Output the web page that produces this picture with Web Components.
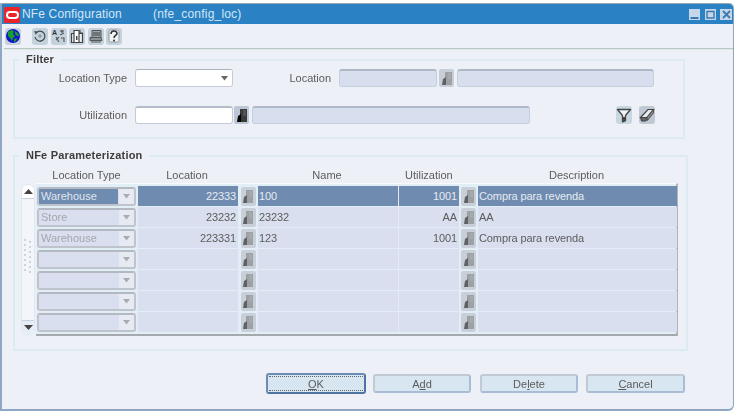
<!DOCTYPE html>
<html><head><meta charset="utf-8"><title>NFe Configuration</title>
<style>
html,body{margin:0;padding:0;background:#fff;width:739px;height:412px;overflow:hidden;font:11px "Liberation Sans",Arial,sans-serif;color:#5c5c5c}
</style></head><body>
<nfe-window>
  <nfe-title slot="title" name="NFe Configuration" code="(nfe_config_loc)"></nfe-title>
  <nfe-toolbar slot="tools"></nfe-toolbar>
  <nfe-group label="Filter" style="--w:672px;--h:86px;--ml:11px;--mt:3px">
    <nfe-filter></nfe-filter>
  </nfe-group>
  <nfe-group label="NFe Parameterization" style="--w:675px;--h:202px;--ml:11px;--mt:10px">
    <nfe-table></nfe-table>
  </nfe-group>
  <nfe-actions>
    <nfe-btn focus style="width:100px"><u>O</u>K</nfe-btn>
    <nfe-btn style="width:98px;margin-left:-1px">A<u>d</u>d</nfe-btn>
    <nfe-btn style="width:98px;margin-left:1px">De<u>l</u>ete</nfe-btn>
    <nfe-btn style="width:99px"><u>C</u>ancel</nfe-btn>
  </nfe-actions>
</nfe-window>
<script>
const def=(tag,html,init)=>customElements.define(tag,class extends HTMLElement{
  constructor(){super();this.attachShadow({mode:'open'}).innerHTML=typeof html==='function'?html(this):html}
  connectedCallback(){
    if(typeof html==='function'){this.shadowRoot.innerHTML=html(this)}
    if(init)init(this)
  }
});
const a=(el,n,d='')=>el.getAttribute(n)??d;

const ICONS={
 globe:`<circle cx="8" cy="8" r="7" fill="#1414c8"/><path d="M3 4l3-2 3 1-1 3 2 2-2 2-1 3-2-3-2-2z" fill="#12a02e"/><path d="M10 3l3 2 1 3-2 0-2-2z" fill="#12a02e"/><path d="M9 11l3-1-1 3-2 1z" fill="#12a02e"/>`,
 refresh:`<path d="M4 5a5 5 0 1 1-1 4" fill="none" stroke="#4a4a4a" stroke-width="1.3"/><path d="M2 3l3 .5L4 7z" fill="#4a4a4a"/><path d="M6 8h4M8 6v4" stroke="#888" stroke-width="1"/>`,
 lang:`<text x="1" y="7" font-size="7" font-weight="700" font-family="Liberation Sans" fill="#333">A</text><path d="M9 3h4M11 2v3M9 7l4-2" stroke="#444" stroke-width="1" fill="none"/><path d="M5 9l3 5M8 9l-3 3M10 10h3v4" stroke="#555" stroke-width="1.1" fill="none"/>`,
 door:`<path d="M2.500 5.500h11v9h-11z" fill="#e8eef2" stroke="#444" stroke-width="1.2"/><path d="M5 2.500h5v12H5z" fill="#fff" stroke="#444" stroke-width="1.2"/><path d="M11 2v3h3" stroke="#444" fill="none"/><path d="M7 8h1.500v4H7z" fill="#444"/>`,
 note:`<path d="M4 2.500h9v7H4z" fill="#9aa6a8" stroke="#555"/><path d="M2 9.500h11l1 3H2z" fill="#8a9496" stroke="#555"/><path d="M5 5h7M5 7h7" stroke="#444"/><path d="M3 14h10" stroke="#555"/>`,
 help:`<path d="M3 3.500c0-1 1-1.500 2-1.500h6c1 0 2 .5 2 1.500v9c0 1-1 1.500-2 1.500H5c-1 0-2-.5-2-1.500z" fill="#eef3f6" stroke="#999"/><path d="M5 6c0-4 6-4 6-.5 0 2-3 2-3 4.500" fill="none" stroke="#333" stroke-width="1.6"/><circle cx="8" cy="12.500" r="1" fill="#333"/>`,
 funnel:`<path d="M1.500 2.500h13L9.500 8.500v5L6.500 15V8.500z" fill="#eef3f6" stroke="#444" stroke-width="1.3" stroke-linejoin="round"/><path d="M6.500 10h3v4.500h-3z" fill="#444"/>`,
 eraser:`<path d="M1.500 10.500L9 2.500h5.500L8 10.500z" fill="#e8edf0" stroke="#444" stroke-width="1.2"/><path d="M1.500 10.500h6.500l-1 3.500H2.500z" fill="#666" stroke="#444"/><path d="M8 10.500l6.500-8v3.500l-6 7.500z" fill="#888" stroke="#444" stroke-width=".8"/>`
};

def('nfe-window',`<style>
:host{display:flex;flex-direction:column;box-sizing:border-box;width:734px;height:408px;margin-top:3px;background:#eef0f8;
 border:solid #8fa7c2;border-width:1px 1px 2px 2px;border-top-color:#9aa7b4;border-radius:0 5px 6px 0;overflow:hidden;filter:blur(.55px)}
.sep{height:1px;background:#b9c6c2;border-bottom:1px solid #dde8ea;margin:0 0 0 2px;flex:none}
</style><slot name="title"></slot><slot name="tools"></slot><div class="sep"></div><slot></slot>`);

def('nfe-title',el=>`<style>
:host{display:flex;align-items:center;height:20px;background:#2a82c4;color:#d4e6f6;font:12px "Liberation Sans",Arial,sans-serif;flex:none}
.logo{width:16px;height:16px;background:#e8252a;margin:2px 0 0 2px;display:flex;align-items:center;justify-content:center;flex:none;border-radius:1px}
.logo i{display:block;width:9px;height:4px;border:2px solid #fff;border-radius:5px;box-sizing:content-box}
.n{margin-left:2px;letter-spacing:.15px}.c{margin-left:31px;letter-spacing:.2px}
.ctl{margin-left:auto;display:flex;margin-right:1px}
.ctl span{width:11px;height:11px;background:#c3d6ea;display:flex;align-items:center;justify-content:center}
</style><div class="logo"><i></i></div><span class="n">${a(el,'name')}</span><span class="c">${a(el,'code')}</span>
<div class="ctl">
<span><svg width="11" height="11"><path d="M1.500 9h8" stroke="#3d79ad" stroke-width="2"/></svg></span>
<span style="margin-left:5px"><svg width="11" height="11"><path d="M2 2.500h7v6.500H2z" fill="none" stroke="#3d79ad" stroke-width="1.4"/></svg></span>
<span style="margin-left:4px;width:12px"><svg width="11" height="11"><path d="M2 2l7 7M9 2l-7 7" stroke="#3d79ad" stroke-width="1.8"/></svg></span>
</div>`);

def('nfe-icon',el=>`<style>
:host{display:inline-flex;align-items:center;justify-content:center;box-sizing:border-box;width:${a(el,'w','16')}px;height:${a(el,'h','17')}px;
 background:${a(el,'bg','#c4d2de')};border-radius:3px;flex:none}
</style><svg width="16" height="16" viewBox="0 0 16 16">${ICONS[a(el,'name')]||''}</svg>`);

def('nfe-toolbar',`<style>
:host{display:flex;align-items:center;height:24px;padding:0 0 0 3px;flex:none}
.g{display:flex;gap:2.500px;margin-left:11px}
</style><nfe-icon name="globe" w="16" h="17" bg="#c4d2de"></nfe-icon>
<div class="g"><nfe-icon name="refresh"></nfe-icon><nfe-icon name="lang"></nfe-icon><nfe-icon name="door"></nfe-icon><nfe-icon name="note"></nfe-icon><nfe-icon name="help"></nfe-icon></div>`);

def('nfe-group',el=>`<style>
:host{display:block;flex:none}
fieldset{box-sizing:border-box;width:var(--w);height:var(--h);margin:var(--mt) 0 0 var(--ml);padding:0;border:2px solid #dcebf2;min-width:0;position:relative}
legend{margin-left:4px;padding:0 7px;font:700 11px/13px "Liberation Sans",Arial,sans-serif;color:#3d3d3d;letter-spacing:.2px}
</style><fieldset><legend>${a(el,'label')}</legend><slot></slot></fieldset>`);

def('nfe-lov',el=>{
 const on=el.hasAttribute('on');
 return `<style>
:host{display:inline-flex;align-items:center;justify-content:center;box-sizing:border-box;width:${a(el,'w','15')}px;height:${a(el,'h','18')}px;background:${a(el,'bg','#c8ced8')};border-radius:2px;flex:none}
</style><svg width="12" height="15" viewBox="0 0 12 15"><path d="M4 1h7v13H4z" fill="${on?'#3a3a3a':'#9ba1a4'}"/><path d="M2 8l3-2v8H1z" fill="${on?'#000':'#5e6265'}"/><path d="M7 3h3M7 5h3M7 7h3" stroke="${on?'#888':'#b8bcc0'}" stroke-width=".7"/></svg>`});

def('nfe-select',el=>{
 const grid=el.hasAttribute('grid'),sel=el.hasAttribute('selected');
 return `<style>
:host{display:flex;box-sizing:border-box;width:${grid?'99px':'98px'};height:${grid?'19px':'18px'};border:${grid?'2px solid #bfc3cb':'1px solid #c3ccd6'};border-top-color:${grid?'#b4b8c0':'#aab4c0'};border-radius:3px;background:${grid?'#d9dfef':'#fff'};overflow:hidden;flex:none}
.t{flex:1;padding:0 2px;font-size:11px;line-height:${grid?'15':'16'}px;color:${sel?'#dfe6ee':'#a3a7b0'};background:${sel?'#6f8bb0':'transparent'};margin:${sel?'0 1px 0 0':'0'}}
.b{width:15px;display:flex;align-items:center;justify-content:center;background:${grid?'#e7e9f3':'#fff'}}
</style><div class="t"><slot></slot></div><div class="b"><svg width="9" height="5"><path d="M1 0h7L4.500 4.500z" fill="${grid?'#a7abb2':'#666'}"/></svg></div>`});

def('nfe-input',el=>{
 const off=el.hasAttribute('off');
 return `<style>
:host{display:block;box-sizing:border-box;height:18px;border:1px solid ${off?'#c5cfdd':'#c3ccd6'};border-top:2px solid ${off?'#aeb8c6':'#b3bcc8'};border-radius:3px;background:${off?'#d7dfee':'#fff'};flex:none}
</style>`});

def('nfe-filter',`<style>
:host{display:grid;grid-template-columns:120px 98px 1fr;grid-template-rows:18px 18px;row-gap:19px;align-items:center;padding:3px 0 0 0;font-size:11px;color:#5c5c5c}
.l{text-align:right;padding-right:8px;box-sizing:border-box}
.r{display:flex;align-items:center}
.tools{margin-left:auto;display:flex;gap:7px;margin-right:28px}
</style>
<div class="l">Location Type</div><nfe-select></nfe-select>
<div class="r"><span style="width:98px;text-align:right;margin-right:8px">Location</span><nfe-input off style="width:98px"></nfe-input><nfe-lov w="15" bg="#c8ced8" style="margin-left:2px"></nfe-lov><nfe-input off style="width:197px;margin-left:3px"></nfe-input></div>
<div class="l">Utilization</div><nfe-input style="width:98px"></nfe-input>
<div class="r"><nfe-lov on w="15" bg="#bcc6d4" style="margin-left:1px"></nfe-lov><nfe-input off style="width:278px;margin-left:3px"></nfe-input><div class="tools"><nfe-icon name="funnel" w="16" h="18" bg="#c8d6e0"></nfe-icon><nfe-icon name="eraser" w="16" h="18" bg="#c0c8d4"></nfe-icon></div></div>`);

def('nfe-row',el=>{
 const s=el.hasAttribute('selected');
 const bg=s?'#6f8bb0':'#d9dfef',fg=s?'#e6ebf2':'#5c5c5c';
 return `<style>
:host{display:grid;grid-template-columns:101px 100px 20px 140px 61px 19px 199px;height:20px;margin-bottom:1px;align-items:stretch}
.c{background:${bg};color:${fg};font-size:11px;line-height:20px;padding:0 2px 0 1px;box-sizing:border-box;overflow:hidden;white-space:nowrap;letter-spacing:-.1px}
.n{text-align:right}.k{display:flex;align-items:center;justify-content:center;background:#e2eef5}
.s{display:flex;align-items:center;background:#e2eef5}
.u{border-left:1px solid #e6e9f4}
</style>
<div class="s"><nfe-select grid ${s?'selected':''} >${a(el,'type')}</nfe-select></div>
<div class="c n">${a(el,'loc')}</div>
<div class="k"><nfe-lov w="15" h="19" bg="#c9cfd8"></nfe-lov></div>
<div class="c">${a(el,'name')}</div>
<div class="c n u">${a(el,'util')}</div>
<div class="k"><nfe-lov w="15" h="19" bg="#c9cfd8"></nfe-lov></div>
<div class="c">${a(el,'desc')}</div>`});

def('nfe-scroll',`<style>
:host{display:flex;flex-direction:column;box-sizing:border-box;width:14px;height:151px;margin-top:2px;border:1px solid #dce9f0;border-radius:6px;background:#f3f5fb;flex:none}
.b{height:13px;display:flex;align-items:center;justify-content:center;flex:none}
.up{border-bottom:1px solid #c9d2d8;background:#fff;border-radius:6px 6px 0 0}.dn{border-top:1px solid #c9d2d8;background:#e6edf6;border-radius:0 0 6px 6px;margin-top:auto}
.grip{margin:40px auto 0;display:grid;grid-template-columns:3px 3px;gap:3px 2px;width:8px}
.grip i{width:2px;height:2px;background:#cdd5dc;display:block}
.grip i:nth-child(even){transform:translateY(2px)}
</style><div class="b up"><svg width="9" height="5"><path d="M4.500 0L9 5H0z" fill="#444"/></svg></div>
<div class="grip"><i></i><i></i><i></i><i></i><i></i><i></i><i></i><i></i><i></i><i></i><i></i><i></i><i></i><i></i></div>
<div class="b dn"><svg width="9" height="5"><path d="M0 0h9L4.500 5z" fill="#444"/></svg></div>`);

def('nfe-table',`<style>
:host{display:block;padding-left:6px;font-size:11px;color:#5c5c5c}
.h{display:grid;grid-template-columns:101px 100px 20px 140px 61px 19px 199px;margin-left:15px;height:13px;line-height:13px;margin-top:7px}
.h span{text-align:center}
.w{display:flex;gap:1px}
.g{box-sizing:border-box;width:642px;height:153px;margin-top:1px;padding:2px 1px 0 1px;background:#e2eef5;border-top:1px solid #f7f9fd;border-right:2px solid #b1b5ba;border-bottom:2px solid #a5a9ae}
</style>
<div class="h"><span>Location Type</span><span>Location</span><span></span><span>Name</span><span style="grid-column:5/7;text-align:left;padding-left:8px">Utilization</span><span>Description</span></div>
<div class="w"><nfe-scroll></nfe-scroll><div class="g">
<nfe-row selected type="Warehouse" loc="22333" name="100" util="1001" desc="Compra para revenda"></nfe-row>
<nfe-row type="Store" loc="23232" name="23232" util="AA" desc="AA"></nfe-row>
<nfe-row type="Warehouse" loc="223331" name="123" util="1001" desc="Compra para revenda"></nfe-row>
<nfe-row></nfe-row><nfe-row></nfe-row><nfe-row></nfe-row><nfe-row></nfe-row>
</div></div>`);

def('nfe-actions',`<style>
:host{display:flex;gap:8px;padding:23px 0 0 264px;flex:none}
</style><slot></slot>`);

def('nfe-btn',el=>{
 const f=el.hasAttribute('focus');
 return `<style>
:host{display:flex;align-items:center;justify-content:center;box-sizing:border-box;height:${f?21:19}px;margin-top:${f?-1:0}px;background:#d7e6f0;font-size:11px;color:#5c5c5c;
 border:2px solid ${f?'#6c8cb4':'#c1c9d2'};border-right-color:${f?'#4f74a4':'#a9bcd6'};border-bottom-color:${f?'#4f74a4':'#a9bcd6'};border-radius:3px;flex:none}
.i{flex:1;margin:${f?'1px':'0'};height:${f?'calc(100% - 2px)':'auto'};border-top:${f?'1px dotted #666':'0'};border-bottom:${f?'1px dotted #666':'0'};text-align:center;line-height:14px;box-sizing:border-box}
</style><div class="i"><slot></slot></div>`});
</script>
</body></html>
